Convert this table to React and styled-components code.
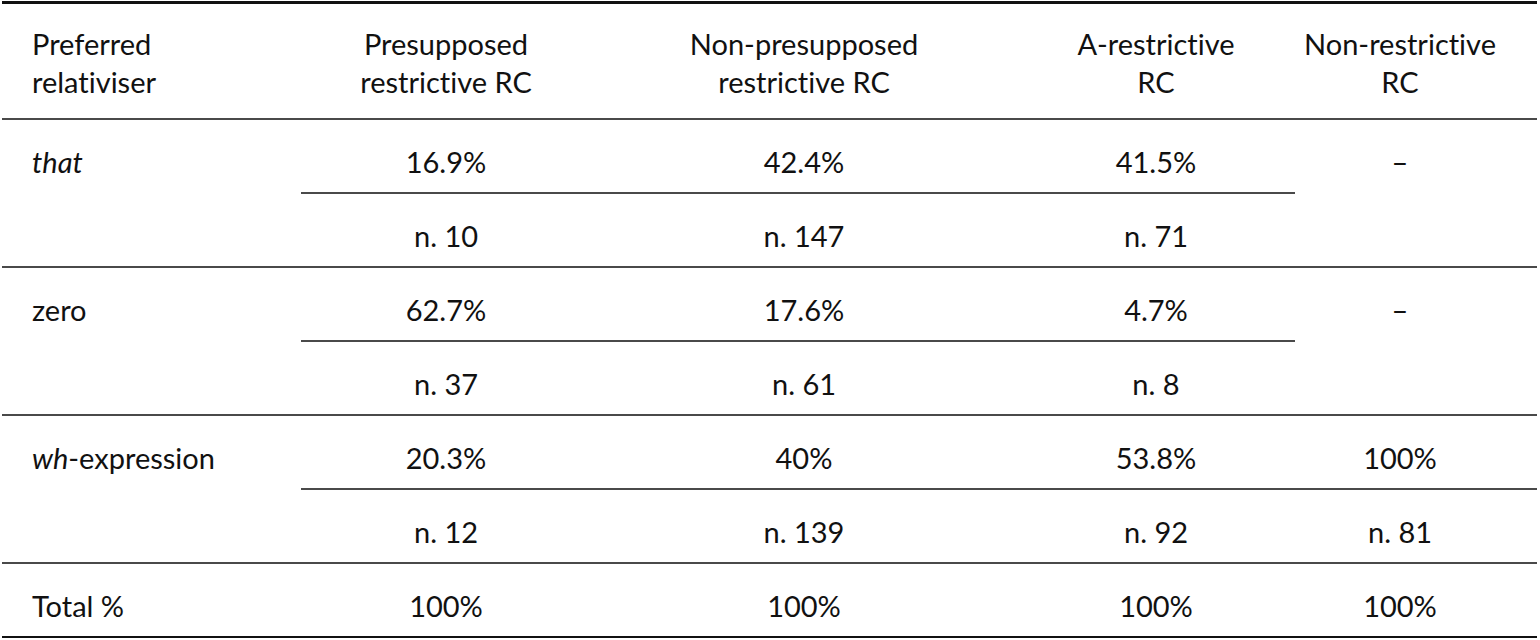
import React from "react";
import styled, { createGlobalStyle } from "styled-components";

const Global = createGlobalStyle`
  html, body { margin: 0; padding: 0; background: #ffffff; }
  body {
    font-family: Lato, "Open Sans", sans-serif;
    color: #111111;
    font-variant-ligatures: none;
    font-feature-settings: "liga" 0, "clig" 0, "dlig" 0;
  }
`;

const Page = styled.div`
  padding: 1px 3px 0 2px;
  width: 1535px;
`;

const Table = styled.div`
  display: grid;
  grid-template-columns: 299px 290px 426px 278px 242px;
  border-top: 3px solid #111;
  font-size: 29px;
  line-height: 38px;
`;

const lineColor = {
  head: "#4a4a4a",
  group: "#4a4a4a",
  sub: "#4a4a4a",
  end: "#111111",
};

const Cell = styled.div`
  box-sizing: border-box;
  display: flex;
  flex-direction: column;
  align-items: ${(p) => (p.$left ? "flex-start" : "center")};
  text-align: ${(p) => (p.$left ? "left" : "center")};
  padding: ${(p) => (p.$head ? "21px" : "23px")} ${(p) => (p.$last ? "32px" : "0")} 0
    ${(p) => (p.$left ? "30px" : "0")};
  height: ${(p) => (p.$head ? "116px" : p.$span ? "148px" : "74px")};
  grid-row: ${(p) => (p.$span ? "span 2" : "auto")};
  border-bottom: ${(p) => (p.$line ? `2px solid ${lineColor[p.$line]}` : "none")};
`;

const Em = styled.i`
  font-style: italic;
`;

const header = [
  ["Preferred", "relativiser"],
  ["Presupposed", "restrictive RC"],
  ["Non-presupposed", "restrictive RC"],
  ["A-restrictive", "RC"],
  ["Non-restrictive", "RC"],
];

const groups = [
  {
    label: <Em>that</Em>,
    pct: ["16.9%", "42.4%", "41.5%"],
    n: ["n. 10", "n. 147", "n. 71"],
    last: null,
  },
  {
    label: "zero",
    pct: ["62.7%", "17.6%", "4.7%"],
    n: ["n. 37", "n. 61", "n. 8"],
    last: null,
  },
  {
    label: (
      <>
        <Em>wh</Em>-expression
      </>
    ),
    pct: ["20.3%", "40%", "53.8%"],
    n: ["n. 12", "n. 139", "n. 92"],
    last: ["100%", "n. 81"],
  },
];

const totals = ["100%", "100%", "100%", "100%"];

export default function App() {
  return (
    <Page>
      <Global />
      <Table>
        {header.map((h, i) => (
          <Cell key={`h${i}`} $head $left={i === 0} $last={i === 4} $line="head">
            <span>{h[0]}</span>
            <span>{h[1]}</span>
          </Cell>
        ))}
        {groups.map((g, gi) => (
          <React.Fragment key={`g${gi}`}>
            <Cell $left $span $line="group">
              <span>{g.label}</span>
            </Cell>
            {g.pct.map((v, i) => (
              <Cell key={`p${i}`} $line="sub">
                {v}
              </Cell>
            ))}
            {g.last ? (
              <Cell $last $line="sub">
                {g.last[0]}
              </Cell>
            ) : (
              <Cell $last $span $line="group">
                –
              </Cell>
            )}
            {g.n.map((v, i) => (
              <Cell key={`n${i}`} $line="group">
                {v}
              </Cell>
            ))}
            {g.last && (
              <Cell $last $line="group">
                {g.last[1]}
              </Cell>
            )}
          </React.Fragment>
        ))}
        <Cell $left $line="end">
          Total %
        </Cell>
        {totals.map((v, i) => (
          <Cell key={`t${i}`} $last={i === 3} $line="end">
            {v}
          </Cell>
        ))}
      </Table>
    </Page>
  );
}
